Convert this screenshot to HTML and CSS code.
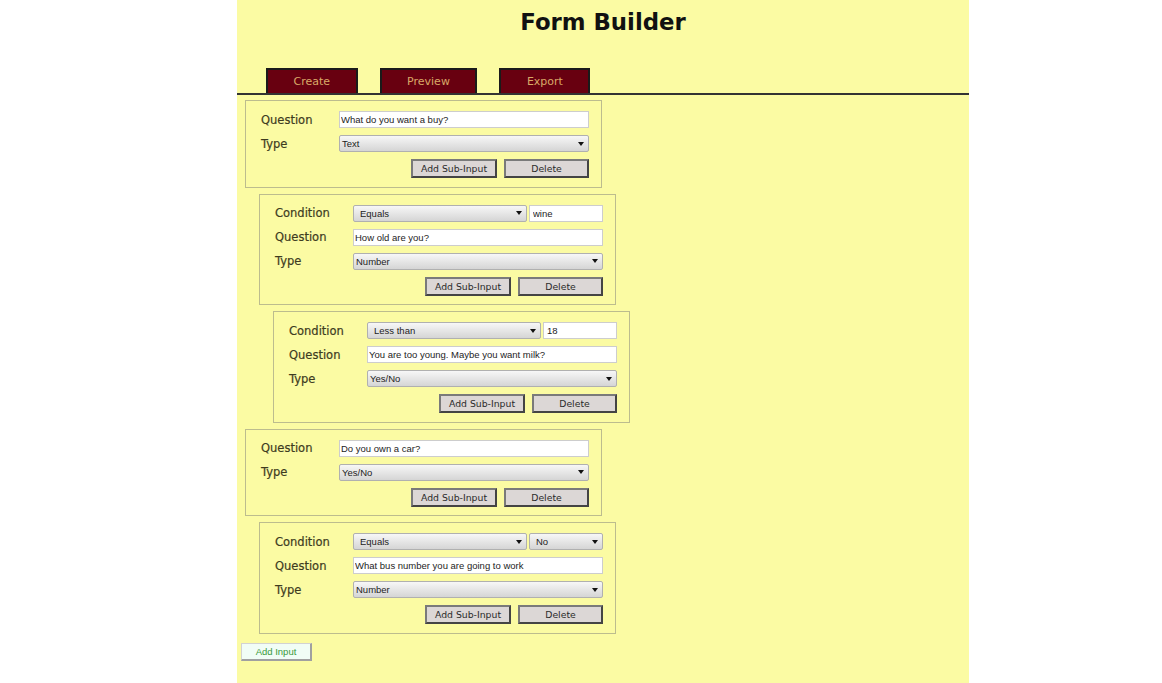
FILE: index.html
```html
<!DOCTYPE html>
<html lang="en">
<head>
<meta charset="utf-8">
<title>Form Builder</title>
<link rel="stylesheet" href="styles.css">
</head>
<body>
<div class="page">
  <h1 class="title">Form Builder</h1>
  <nav class="tabs">
    <span class="tab">Create</span>
    <span class="tab">Preview</span>
    <span class="tab">Export</span>
  </nav>

  <div class="inputs">
    <div class="block">
      <div class="row"><span class="label">Question</span><input class="text" type="text" value="What do you want a buy?"></div>
      <div class="row"><span class="label">Type</span><div class="select">Text</div></div>
      <div class="actions"><button class="btn">Add Sub-Input</button><button class="btn del">Delete</button></div>
    </div>

    <div class="block depth-1">
      <div class="row"><span class="label">Condition</span><div class="select cond">Equals</div><input class="text value" type="text" value="wine"></div>
      <div class="row"><span class="label">Question</span><input class="text" type="text" value="How old are you?"></div>
      <div class="row"><span class="label">Type</span><div class="select">Number</div></div>
      <div class="actions"><button class="btn">Add Sub-Input</button><button class="btn del">Delete</button></div>
    </div>

    <div class="block depth-2">
      <div class="row"><span class="label">Condition</span><div class="select cond">Less than</div><input class="text value" type="text" value="18"></div>
      <div class="row"><span class="label">Question</span><input class="text" type="text" value="You are too young. Maybe you want milk?"></div>
      <div class="row"><span class="label">Type</span><div class="select">Yes/No</div></div>
      <div class="actions"><button class="btn">Add Sub-Input</button><button class="btn del">Delete</button></div>
    </div>

    <div class="block">
      <div class="row"><span class="label">Question</span><input class="text" type="text" value="Do you own a car?"></div>
      <div class="row"><span class="label">Type</span><div class="select">Yes/No</div></div>
      <div class="actions"><button class="btn">Add Sub-Input</button><button class="btn del">Delete</button></div>
    </div>

    <div class="block depth-1">
      <div class="row"><span class="label">Condition</span><div class="select cond">Equals</div><div class="select cond value">No</div></div>
      <div class="row"><span class="label">Question</span><input class="text" type="text" value="What bus number you are going to work"></div>
      <div class="row"><span class="label">Type</span><div class="select">Number</div></div>
      <div class="actions"><button class="btn">Add Sub-Input</button><button class="btn del">Delete</button></div>
    </div>
  </div>

  <button class="add-input">Add Input</button>
</div>
</body>
</html>
```

FILE: styles.css
```css
html, body {
  margin: 0;
  padding: 0;
  background: #ffffff;
}

.page {
  margin-left: 237px;
  width: 732px;
  min-height: 100vh;
  background: #fbfba3;
  padding-top: 8px;
  box-sizing: border-box;
  font-family: "DejaVu Sans", sans-serif;
}

.title {
  margin: 0;
  text-align: center;
  font-size: 22.8px;
  line-height: 28px;
  font-weight: bold;
  color: #111;
}

.tabs {
  display: flex;
  gap: 22px;
  margin-top: 32px;
  padding-left: 29px;
  border-bottom: 2px solid #333;
}

.tab {
  display: flex;
  align-items: center;
  height: 23px;
  padding: 0 25.5px;
  background: #680010;
  border: 2px solid #1a1a1a;
  border-bottom: none;
  color: #d9a867;
  font-size: 11px;
}

.inputs {
  display: flex;
  flex-direction: column;
  gap: 6px;
  margin-top: 5px;
}

.block {
  width: 357px;
  box-sizing: border-box;
  margin-left: 8px;
  padding: 10px 12px 8.5px 15px;
  border: 1px solid #bcbc8e;
  display: flex;
  flex-direction: column;
  gap: 7px;
}

.depth-1 { margin-left: 22px; }
.depth-2 { margin-left: 36px; }

.row {
  display: flex;
  align-items: center;
  height: 17px;
}

.label {
  width: 78px;
  flex: none;
  font-size: 11.5px;
  color: #3e3b1f;
  -webkit-text-stroke: 0.2px #3e3b1f;
}

.text {
  flex: 1;
  min-width: 0;
  height: 17px;
  box-sizing: border-box;
  margin: 0;
  padding: 0 1px;
  border: 1px solid #cdcdcd;
  background: #ffffff;
  font-family: "Liberation Sans", Arial, sans-serif;
  font-size: 9.5px;
  color: #1d1d1d;
  outline: none;
}

.text.value {
  flex: none;
  width: 74px;
  margin-left: 2px;
  padding-left: 3px;
}

.select {
  flex: 1;
  display: flex;
  align-items: center;
  justify-content: space-between;
  height: 17px;
  box-sizing: border-box;
  padding: 0 4px 0 2px;
  border: 1px solid #b0b0b0;
  border-radius: 2px;
  background: linear-gradient(#f7f7f7, #d5d5d5);
  font-family: "Liberation Sans", Arial, sans-serif;
  font-size: 9.5px;
  color: #1d1d1d;
}

.select::after {
  content: "";
  border-left: 3px solid transparent;
  border-right: 3px solid transparent;
  border-top: 4px solid #111;
}

.select.cond {
  padding-left: 6px;
}

.select.value {
  flex: none;
  width: 74px;
  margin-left: 2px;
}

.actions {
  display: flex;
  justify-content: flex-end;
  gap: 7px;
  height: 19px;
}

.btn {
  width: 86px;
  height: 19px;
  margin: 0;
  padding: 0;
  box-sizing: border-box;
  background: #dcd7d6;
  border: 2px solid;
  border-color: #7a7a7a #444 #444 #7a7a7a;
  font-family: "DejaVu Sans", sans-serif;
  font-size: 9.3px;
  color: #2a2a2a;
}

.btn.del {
  width: 85px;
}

.add-input {
  display: block;
  margin: 9px 0 0 4px;
  width: 71px;
  height: 18px;
  padding: 0;
  box-sizing: border-box;
  background: #f1fdf6;
  border: 1px solid #d2d2d2;
  border-right: 2px solid #a0a0a0;
  border-bottom: 2px solid #a0a0a0;
  font-family: "Liberation Sans", Arial, sans-serif;
  font-size: 9.5px;
  color: #3a9a3a;
}
```
